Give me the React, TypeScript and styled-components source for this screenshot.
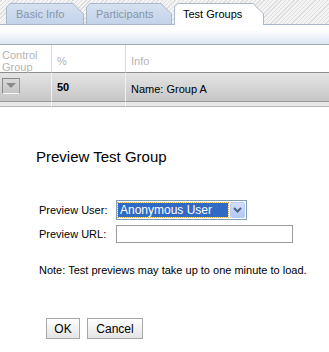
import styled, { createGlobalStyle } from "styled-components";

const GlobalStyle = createGlobalStyle`
    body {
        margin: 0;
        background: #ffffff;
        font-family: "Liberation Sans", Arial, sans-serif;
        font-size: 11px;
        color: #000000;
    }
`;

const tabs = [
    { label: "Basic Info", width: 78 },
    { label: "Participants", width: 86 },
    { label: "Test Groups", width: 90 },
];

const App = () => {
    const activeTab = "Test Groups";

    return (
        <Page>
            <GlobalStyle />
            <TabStrip>
                {tabs.map((tab) => (
                    <Tab key={tab.label} $active={tab.label === activeTab} $width={tab.width}>
                        <TabLabel $active={tab.label === activeTab}>{tab.label}</TabLabel>
                    </Tab>
                ))}
            </TabStrip>
            <Band />

            <Grid>
                <HeaderCell>Control<br />Group</HeaderCell>
                <HeaderCell $centered>%</HeaderCell>
                <HeaderCell $centered $last>Info</HeaderCell>

                <DataCell>
                    <DropButton>
                        <svg width="10" height="6" viewBox="0 0 10 6">
                            <path d="M0 0 L10 0 L5 5 Z" fill="#8a8a8a" />
                        </svg>
                    </DropButton>
                </DataCell>
                <DataCell><Percent>50</Percent></DataCell>
                <DataCell $last $low>Name: Group A</DataCell>

                <StubCell />
                <StubCell />
                <StubCell $last />
            </Grid>

            <Dialog>
                <DialogTitle>Preview Test Group</DialogTitle>

                <Form>
                    <Label>Preview User:</Label>
                    <FakeSelect>
                        <SelectedValue>Anonymous User</SelectedValue>
                        <SelectArrow>
                            <svg width="9" height="6" viewBox="0 0 9 6">
                                <path d="M1 1 L4.5 4.5 L8 1" stroke="#4d6185" strokeWidth="2" fill="none" />
                            </svg>
                        </SelectArrow>
                    </FakeSelect>

                    <Label>Preview URL:</Label>
                    <UrlInput type="text" />
                </Form>

                <Note>Note: Test previews may take up to one minute to load.</Note>

                <Buttons>
                    <Button $width={34}>OK</Button>
                    <Button $width={56}>Cancel</Button>
                </Buttons>
            </Dialog>
        </Page>
    );
};

const Page = styled.div`
    width: 329px;
    height: 352px;
    overflow: hidden;
    display: flex;
    flex-direction: column;
`;

const TabStrip = styled.div`
    height: 24px;
    display: flex;
    align-items: flex-end;
    gap: 2px;
    padding-left: 6px;
    border-bottom: 1px solid #a9b7c9;
    background: repeating-linear-gradient(
        -45deg,
        #f4f4f4 0px,
        #f4f4f4 2px,
        #dedede 2px,
        #dedede 3px
    );
`;

const Tab = styled.div<{ $active: boolean; $width: number }>`
    position: relative;
    width: ${({ $width }) => $width}px;
    height: ${({ $active }) => ($active ? 22 : 21)}px;
    margin-bottom: ${({ $active }) => ($active ? -1 : 0)}px;
    background: #a9b8cb;
    clip-path: polygon(0 4px, 4px 0, calc(100% - 11px) 0, 100% 11px, 100% 100%, 0 100%);

    &::before {
        content: "";
        position: absolute;
        left: 1px;
        top: 1px;
        right: 1px;
        bottom: 0;
        background: ${({ $active }) =>
            $active ? "#ffffff" : "linear-gradient(#d6e1f0, #c3d3e9)"};
        clip-path: polygon(0 3px, 3px 0, calc(100% - 10px) 0, 100% 10px, 100% 100%, 0 100%);
    }
`;

const TabLabel = styled.span<{ $active: boolean }>`
    position: relative;
    display: block;
    padding: 5px 0 0 ${({ $active }) => ($active ? 9 : 10)}px;
    font-size: 11px;
    line-height: 13px;
    color: ${({ $active }) => ($active ? "#000000" : "#8796aa")};
`;

const Band = styled.div`
    height: 19px;
    background: linear-gradient(#ffffff 0%, #ffffff 25%, #dde6f3 100%);
    border-bottom: 1px solid #a3aab4;
`;

const Grid = styled.div`
    display: grid;
    grid-template-columns: 52px 74px 1fr;
    grid-template-rows: 28px 29px 5px;
`;

const HeaderCell = styled.div<{ $centered?: boolean; $last?: boolean }>`
    display: flex;
    align-items: ${({ $centered }) => ($centered ? "center" : "flex-start")};
    padding: ${({ $centered }) => ($centered ? "5px 0 0 5px" : "4px 0 0 2px")};
    line-height: 12px;
    font-size: 11px;
    color: #b4b4b4;
    border-right: ${({ $last }) => ($last ? "none" : "1px solid #dcdcdc")};
    border-bottom: 1px solid #8e8e8e;
`;

const DataCell = styled.div<{ $last?: boolean; $low?: boolean }>`
    display: flex;
    align-items: center;
    padding: ${({ $low }) => ($low ? "4px 0 0 5px" : "0 0 0 2px")};
    font-size: 11px;
    color: #000000;
    background: linear-gradient(#e4e4e4, #c6c6c6);
    border-right: ${({ $last }) => ($last ? "none" : "1px solid #f2f2f2")};
    border-bottom: 1px solid #9a9a9a;
`;

const Percent = styled.span`
    font-weight: bold;
    padding-left: 3px;
`;

const DropButton = styled.div`
    width: 16px;
    height: 14px;
    display: flex;
    align-items: center;
    justify-content: center;
    margin-top: -3px;
    border: 1px solid #8a8a8a;
    border-bottom-color: #f6f6f6;
    border-right-color: #9c9c9c;
    background: linear-gradient(#d8d8d8, #c4c4c4);
`;

const StubCell = styled.div<{ $last?: boolean }>`
    background: #e7e7e7;
    border-right: ${({ $last }) => ($last ? "none" : "1px solid #ffffff")};
    border-bottom: 1px solid #b4b4b4;
`;

const Dialog = styled.div`
    flex: 1;
    background: #ffffff;
    padding: 41px 0 0 36px;
`;

const DialogTitle = styled.div`
    font-size: 15px;
    line-height: 18px;
    color: #000000;
`;

const Form = styled.div`
    display: grid;
    grid-template-columns: 77px auto;
    row-gap: 5px;
    align-items: center;
    margin: 34px 0 0 3px;
`;

const Label = styled.div`
    font-size: 11px;
    color: #000000;
`;

const FakeSelect = styled.div`
    width: 127px;
    height: 18px;
    display: flex;
    align-items: center;
    gap: 2px;
    padding: 0 1px 0 1px;
    border: 1px solid #7f9db9;
    background: #ffffff;
`;

const SelectedValue = styled.div`
    flex: 1;
    height: 14px;
    display: flex;
    align-items: center;
    padding-left: 2px;
    font-size: 12px;
    color: #ffffff;
    background: #316ac5;
    outline: 1px dotted #e8b54a;
`;

const SelectArrow = styled.div`
    width: 15px;
    height: 16px;
    display: flex;
    align-items: center;
    justify-content: center;
    border-radius: 2px;
    background: linear-gradient(#d2def9, #b4c8f6);
    border: 1px solid #b9cbf5;
    box-sizing: border-box;
`;

const UrlInput = styled.input`
    width: 177px;
    height: 18px;
    box-sizing: border-box;
    margin: 0;
    padding: 0 2px;
    border: 1px solid #9c9c9c;
    font-family: "Liberation Sans", Arial, sans-serif;
    font-size: 11px;
`;

const Note = styled.div`
    margin: 21px 0 0 3px;
    font-size: 11px;
    color: #000000;
`;

const Buttons = styled.div`
    display: flex;
    gap: 7px;
    margin: 42px 0 0 10px;
`;

const Button = styled.button<{ $width: number }>`
    width: ${({ $width }) => $width}px;
    height: 21px;
    padding: 0;
    font-family: "Liberation Sans", Arial, sans-serif;
    font-size: 12px;
    color: #000000;
    border: 1px solid #a7a7a7;
    border-radius: 0;
    background: linear-gradient(#ffffff, #e4e4e4);
`;

export default App;
